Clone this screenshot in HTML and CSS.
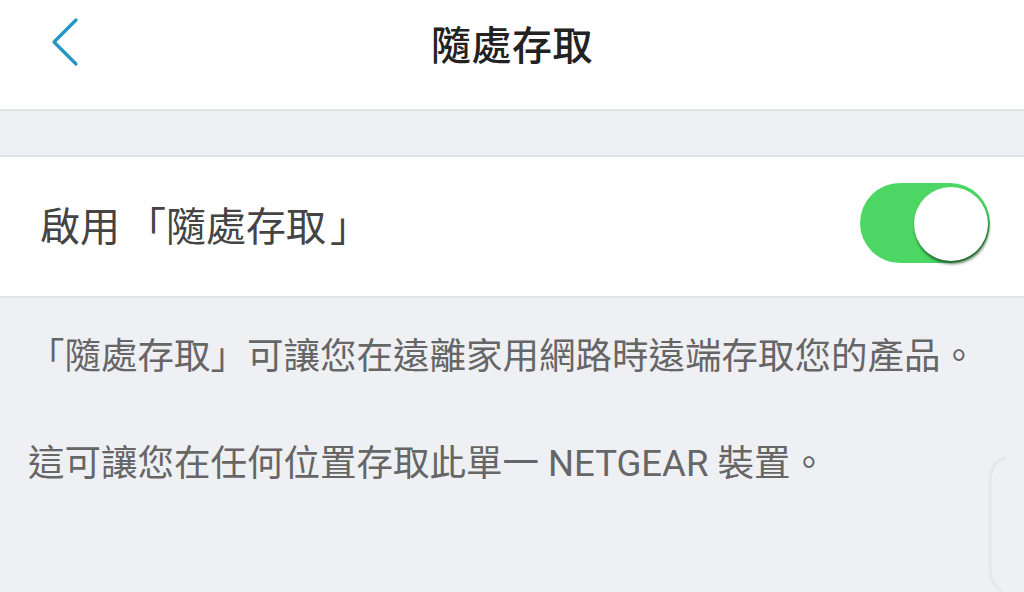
FILE: index.html
```html
<!DOCTYPE html>
<html lang="zh-Hant">
<head>
<meta charset="utf-8">
<link rel="stylesheet" href="styles.css">
</head>
<body>
<div class="screen">
  <header class="topbar">
    <button class="back" aria-label="back">
      <svg width="30" height="50" viewBox="0 0 30 50"><path d="M25 3 L3 25 L25 47" fill="none" stroke="#2596c4" stroke-width="3.2" stroke-linecap="round" stroke-linejoin="round"/></svg>
    </button>
    <h1 class="title">隨處存取</h1>
  </header>
  <div class="gap"></div>
  <section class="card">
    <span class="card-label">啟用<span class="br-open">「</span>隨處存取<span class="br-close">」</span></span>
    <div class="switch"><div class="knob"></div></div>
  </section>
  <p class="desc first">「隨處存取」可讓您在遠離家用網路時遠端存取您的產品。</p>
  <p class="desc">這可讓您在任何位置存取此單一 NETGEAR 裝置。</p>
  <svg class="edge" width="30" height="140" viewBox="0 0 30 140"><path d="M22 2 C12 6 8 12 8 30 L8 110 C8 124 12 130 22 138" fill="none" stroke="#e6e7ea" stroke-width="3" stroke-linecap="round"/></svg>
</div>
</body>
</html>
```
FILE: styles.css
```css
html, body {
  margin: 0;
  padding: 0;
}
body {
  width: 1024px;
  height: 592px;
  overflow: hidden;
  background: #eff0f4;
  font-family: Roboto, "Noto Sans CJK TC", sans-serif;
}
.screen {
  position: relative;
  height: 592px;
}
.topbar {
  height: 109px;
  background: #ffffff;
  border-bottom: 2px solid #e2e3e6;
  display: flex;
  align-items: center;
  justify-content: center;
  position: relative;
}
.back {
  position: absolute;
  left: 51px;
  top: 17px;
  border: 0;
  background: none;
  padding: 0;
  width: 30px;
  height: 50px;
}
.back svg { display: block; }
.title {
  margin: 0 0 23px 0;
  font-size: 40px;
  font-weight: 500;
  color: #222222;
  letter-spacing: 0.5px;
}
.gap {
  height: 44px;
}
.card {
  height: 139px;
  background: #ffffff;
  border-top: 2px solid #e2e3e6;
  border-bottom: 2px solid #e2e3e6;
  display: flex;
  align-items: center;
  justify-content: space-between;
  padding: 0 34px 0 40px;
}
.card-label {
  font-size: 40px;
  color: #444444;
  margin-top: -6px;
}
.br-open {
  margin-left: 6px;
}
.br-close {
  margin-left: 4px;
}
.switch {
  width: 130px;
  height: 80px;
  border-radius: 40px;
  background: #4cd664;
  position: relative;
  margin-top: -8px;
}
.knob {
  position: absolute;
  right: 2px;
  top: 4px;
  width: 74px;
  height: 74px;
  border-radius: 50%;
  background: #ffffff;
  box-shadow: 1px 3px 3px rgba(20, 70, 30, 0.75);
}
.desc {
  margin: 0;
  padding-left: 28px;
  font-size: 36.5px;
  color: #666666;
  line-height: 50px;
  white-space: nowrap;
}
.desc.first {
  margin-top: 34px;
}
.desc + .desc {
  margin-top: 57px;
}
.edge {
  position: absolute;
  right: 12px;
  top: 456px;
}
```
